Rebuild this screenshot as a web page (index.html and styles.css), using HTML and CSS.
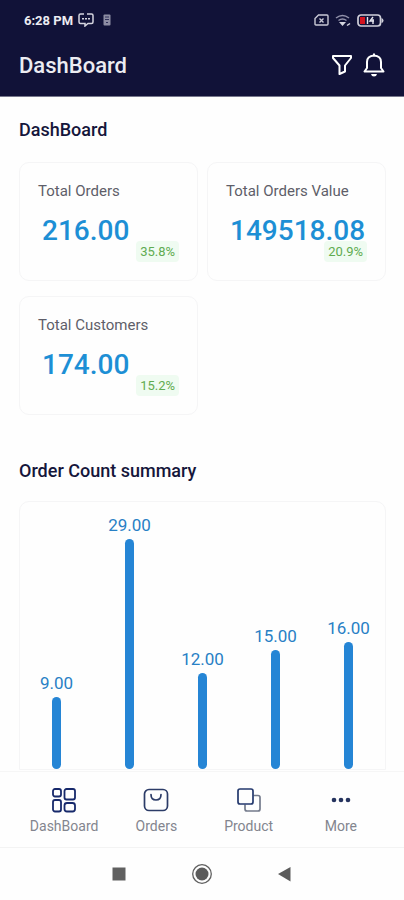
FILE: index.html
```html
<!DOCTYPE html>
<html lang="en">
<head>
  <meta charset="UTF-8">
  <meta name="viewport" content="width=device-width, initial-scale=1.0">
  <title>DashBoard</title>
  <link rel="stylesheet" href="styles.css">
</head>
<body>
  <header class="top">
    <!-- Status bar -->
    <div class="status">
      <span class="time">6:28 PM</span>
      <svg width="16" height="14" viewBox="0 0 16 14" fill="none" stroke="#d5d5df" stroke-width="1.5">
        <path d="M6 1H2.5Q1 1 1 2.5V9q0 1.500 1.500 1.500H7V13l3-2.500h3.500Q15 10.500 15 9V2.500Q15 1 13.500 1H9"/>
        <path d="M4 5.800h2M7 5.800h2M10 5.800h2"/>
      </svg>
      <svg class="sim" width="8" height="12" viewBox="0 0 8 12">
        <rect x="0.500" y="0.500" width="7" height="11" rx="1" fill="#8d8da3"/>
        <path d="M2 3h4M2 5.500h4M3 8.500h2" stroke="#30305a" stroke-width="1"/>
      </svg>
      <div class="status-right">
        <svg width="15" height="12" viewBox="0 0 15 12" fill="none" stroke="#c9c9d6" stroke-width="1.400">
          <path d="M4.500 1H13q1 0 1 1v8q0 1-1 1H2q-1 0-1-1V4.500z"/>
          <path d="M5.500 4.500l4 4M9.500 4.500l-4 4"/>
        </svg>
        <svg width="16" height="13" viewBox="0 0 16 13" fill="none" stroke="#9292ab" stroke-width="1.500">
          <path d="M1 4q6.500-5 13 0M3.500 6.500q4-3 8 0"/>
          <path d="M4 8h7L7.500 12z" fill="#d5d5df" stroke="none"/>
          <path d="M12 11.500l3-2" stroke="#d5d5df"/>
        </svg>
        <svg width="27" height="13" viewBox="0 0 27 13">
          <rect x="1" y="1" width="22.500" height="11" rx="3" fill="#111238" stroke="#cfcfda" stroke-width="1.700"/>
          <rect x="3" y="3" width="5" height="7" fill="#d31320"/>
          <path d="M10.500 3v7M16 3l-3 4h4M16 5v5" fill="none" stroke="#e6e6ee" stroke-width="1.400"/>
          <path d="M24.500 4q2 .5 2 2.500t-2 2.500z" fill="#cfcfda"/>
        </svg>
      </div>
    </div>
    <!-- App bar -->
    <div class="app-bar">
      <h1>DashBoard</h1>
      <button class="icon-button" aria-label="Filter">
        <svg width="22" height="22" viewBox="0 0 22 22" fill="none" stroke="#fff" stroke-width="2" stroke-linejoin="round">
          <path d="M2 2h18v2l-6 7.500v6L8.500 20v-8.500L2 4z"/>
        </svg>
      </button>
      <button class="icon-button" aria-label="Notifications">
        <svg width="22" height="24" viewBox="0 0 22 24" fill="none" stroke="#fff" stroke-width="2" stroke-linejoin="round">
          <path d="M1.500 18.500h19L18 15V9q0-6-7-6.500Q4 3 4 9v6z"/>
          <path d="M11 2.500V.5"/>
          <path d="M8 21h6q-.5 2.500-3 2.500T8 21z" fill="#fff" stroke="none"/>
        </svg>
      </button>
    </div>
  </header>

  <main>
    <h2>DashBoard</h2>
    <div class="cards">
      <div class="card">
        <span class="label">Total Orders</span>
        <span class="value">216.00</span>
        <span class="badge">35.8%</span>
      </div>
      <div class="card">
        <span class="label">Total Orders Value</span>
        <span class="value">149518.08</span>
        <span class="badge">20.9%</span>
      </div>
      <div class="card">
        <span class="label">Total Customers</span>
        <span class="value">174.00</span>
        <span class="badge">15.2%</span>
      </div>
    </div>

    <h2 class="summary-title">Order Count summary</h2>
    <div class="chart">
      <div class="column"><span>9.00</span><div class="bar" style="height: 72px"></div></div>
      <div class="column"><span>29.00</span><div class="bar" style="height: 230px"></div></div>
      <div class="column"><span>12.00</span><div class="bar" style="height: 96px"></div></div>
      <div class="column"><span>15.00</span><div class="bar" style="height: 119px"></div></div>
      <div class="column"><span>16.00</span><div class="bar" style="height: 127px"></div></div>
    </div>
  </main>

  <!-- Tabs -->
  <nav class="tabs">
    <a href="#dashboard">
      <svg width="26" height="26" viewBox="0 0 26 26" fill="none" stroke="#17296b" stroke-width="1.800">
        <rect x="2" y="2" width="8" height="7.500" rx="2"/>
        <rect x="13.500" y="2" width="10.500" height="10.500" rx="2"/>
        <rect x="2" y="13" width="8" height="11.500" rx="2"/>
        <rect x="13.500" y="16" width="10.500" height="8.500" rx="2.500"/>
      </svg>
      <span>DashBoard</span>
    </a>
    <a href="#orders">
      <svg width="26" height="26" viewBox="0 0 26 26" fill="none" stroke="#2c3c68" stroke-width="1.700" stroke-linecap="round">
        <rect x="1.500" y="2.500" width="23" height="21" rx="4.500"/>
        <path d="M8 7.500q0 5.500 5 5.500t5-5.500"/>
      </svg>
      <span>Orders</span>
    </a>
    <a href="#product">
      <svg width="26" height="26" viewBox="0 0 26 26" fill="none" stroke-width="1.700">
        <path d="M17.500 8.500H22q2 0 2 2V22q0 2-2 2H11q-2 0-2-2v-4.500" stroke="#747b8c"/>
        <rect x="2" y="2" width="15" height="15" rx="2" stroke="#24396d"/>
      </svg>
      <span>Product</span>
    </a>
    <a href="#more">
      <svg width="26" height="26" viewBox="0 0 26 26" fill="#26345f">
        <circle cx="6" cy="13" r="2.300"/>
        <circle cx="13" cy="13" r="2.300"/>
        <circle cx="20" cy="13" r="2.300"/>
      </svg>
      <span>More</span>
    </a>
  </nav>

  <!-- System buttons -->
  <footer class="system">
    <button class="icon-button" aria-label="Recent apps">
      <svg width="22" height="22" viewBox="0 0 22 22"><rect x="4.500" y="4.500" width="13" height="13" fill="#606060"/></svg>
    </button>
    <button class="icon-button" aria-label="Home">
      <svg width="22" height="22" viewBox="0 0 22 22">
        <circle cx="11" cy="11" r="9.300" fill="none" stroke="#606060" stroke-width="1.300"/>
        <circle cx="11" cy="11" r="6.500" fill="#5c5c5c"/>
      </svg>
    </button>
    <button class="icon-button" aria-label="Back">
      <svg width="22" height="22" viewBox="0 0 22 22"><path d="M4 11L16.500 4v14.500z" fill="#5c5c5c"/></svg>
    </button>
  </footer>
</body>
</html>
```
FILE: styles.css
```css
* {
  box-sizing: border-box;
}
body {
  font-family: Roboto, sans-serif;
  background-color: #fefefe;
  margin: 0;
  display: flex;
  flex-direction: column;
  height: 100vh;
  overflow: hidden;
}
svg {
  display: block;
  flex: none;
}
.top {
  background-color: #111238;
  color: #ececf2;
  border-bottom: 1px solid #77778c;
}
.status {
  display: flex;
  align-items: center;
  height: 40px;
  padding: 0 20px 0 24px;
  gap: 5px;
}
.time {
  font-size: 13px;
  font-weight: 700;
}
.sim {
  margin-left: 4px;
}
.status-right {
  display: flex;
  align-items: center;
  gap: 6px;
  margin-left: auto;
}
.app-bar {
  display: flex;
  align-items: center;
  height: 56px;
  padding: 0 19px 6px;
  gap: 10px;
}
h1 {
  flex: 1;
  margin: 0;
  font-size: 22px;
  font-weight: 500;
}
.icon-button {
  display: flex;
  padding: 0;
  border: none;
  background: none;
  cursor: pointer;
}
main {
  flex: 1;
  min-height: 0;
  overflow: hidden;
  padding: 21px 18px 0 19px;
}
h2 {
  margin: 0;
  font-size: 18px;
  line-height: 24px;
  font-weight: 500;
  color: #15163b;
}
.cards {
  display: grid;
  grid-template-columns: 1fr 1fr;
  gap: 15px 9px;
  margin-top: 20px;
}
.card {
  display: flex;
  flex-direction: column;
  height: 119px;
  padding: 18px;
  border: 1px solid #f5f5f6;
  border-radius: 10px;
}
.label {
  font-size: 15px;
  line-height: 20px;
  color: #5e5e69;
}
.value {
  margin-top: 20px;
  padding-left: 4px;
  font-size: 28px;
  line-height: 20px;
  font-weight: 500;
  color: #1d8fd5;
}
.badge {
  align-self: flex-end;
  padding: 0 4px;
  border-radius: 4px;
  background-color: #effbf1;
  font-size: 13px;
  line-height: 21px;
  color: #5fab50;
}
.summary-title {
  margin-top: 44px;
}
.chart {
  display: flex;
  align-items: flex-end;
  height: 269px;
  margin-top: 18px;
  border: 1px solid #f5f5f6;
  border-radius: 10px 10px 0 0;
}
.column {
  flex: 1;
  display: flex;
  flex-direction: column;
  align-items: center;
  gap: 4px;
  font-size: 17px;
  line-height: 20px;
  color: #2880c5;
}
.bar {
  width: 9px;
  border-radius: 5px;
  background-color: #2585d5;
}
.tabs {
  display: flex;
  height: 76px;
  padding: 15px 17px 0 18px;
  border-top: 1px solid #f6f6f6;
}
.tabs a {
  flex: 1;
  display: flex;
  flex-direction: column;
  align-items: center;
  gap: 4px;
  font-size: 14px;
  line-height: 18px;
  color: #83858e;
  text-decoration: none;
}
.system {
  display: flex;
  align-items: center;
  justify-content: center;
  gap: 61px;
  height: 53px;
  border-top: 1px solid #f3f3f3;
}
```
